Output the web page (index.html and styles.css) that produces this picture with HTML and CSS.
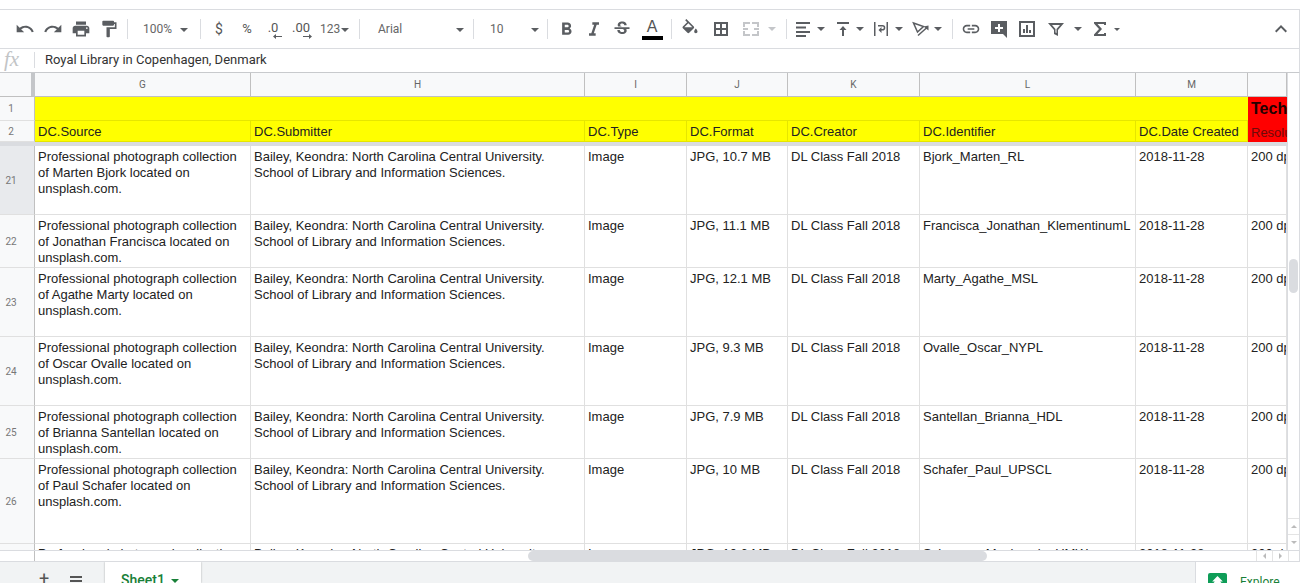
FILE: index.html
```html
<!DOCTYPE html>
<html lang="en">
<head>
    <meta charset="UTF-8">
    <meta name="viewport" content="width=device-width, initial-scale=1.0">
    <title>Sheet1</title>
    <link rel="stylesheet" href="styles.css">
</head>
<body>
    <div class="app">
        <div class="menu-strip"></div>

        <!-- toolbar -->
        <div class="toolbar">
            <button class="tool"><svg width="20" height="20" viewBox="0 0 24 24"><path d="M12.5 8c-2.65 0-5.05 1-6.9 2.6L2 7v9h9l-3.62-3.62c1.39-1.16 3.16-1.88 5.12-1.88 3.54 0 6.55 2.31 7.6 5.5l2.37-.78C21.08 11.03 17.15 8 12.5 8z"/></svg></button>
            <button class="tool"><svg width="20" height="20" viewBox="0 0 24 24"><path d="M18.4 10.6C16.55 9 14.15 8 11.5 8c-4.65 0-8.58 3.03-9.96 7.22L3.9 16c1.05-3.19 4.05-5.5 7.6-5.5 1.95 0 3.73.72 5.12 1.88L13 16h9V7l-3.6 3.6z"/></svg></button>
            <button class="tool"><svg width="20" height="20" viewBox="0 0 24 24"><path d="M19 8H5c-1.66 0-3 1.34-3 3v6h4v4h12v-4h4v-6c0-1.66-1.34-3-3-3zm-3 11H8v-5h8v5zm3-7c-.55 0-1-.45-1-1s.45-1 1-1 1 .45 1 1-.45 1-1 1zm-1-9H6v4h12V3z"/></svg></button>
            <button class="tool"><svg width="20" height="20" viewBox="0 0 24 24"><path d="M18 4V3c0-.55-.45-1-1-1H5c-.55 0-1 .45-1 1v4c0 .55.45 1 1 1h12c.55 0 1-.45 1-1V6h1v4H9v11c0 .55.45 1 1 1h2c.55 0 1-.45 1-1v-9h8V4h-3z"/></svg></button>
            <span class="sep"></span>
            <div class="drop drop-zoom"><span>100%</span><i class="arrow"></i></div>
            <span class="sep"></span>
            <button class="tool txt">$</button>
            <button class="tool txt small">%</button>
            <button class="tool dec dec-one"><span>.0</span><svg class="dec-arrow" width="9" height="5" viewBox="0 0 9 5"><path d="M3 0v2h6v1H3v2L0 2.500z"/></svg></button>
            <button class="tool dec dec-two"><span>.00</span><svg class="dec-arrow" width="9" height="5" viewBox="0 0 9 5"><path d="M6 0v2H0v1h6v2l3-2.500z"/></svg></button>
            <div class="drop drop-num"><span>123</span><i class="arrow"></i></div>
            <span class="sep sep-num"></span>
            <div class="drop drop-font"><span>Arial</span><i class="arrow"></i></div>
            <span class="sep"></span>
            <div class="drop drop-size"><span>10</span><i class="arrow"></i></div>
            <span class="sep"></span>
            <button class="tool"><svg width="21" height="21" viewBox="0 0 24 24"><path d="M15.600 10.790c.97-.67 1.650-1.770 1.650-2.790 0-2.260-1.750-4-4-4H7v14h7.040c2.090 0 3.710-1.700 3.710-3.790 0-1.520-.86-2.820-2.150-3.420zM10 6.500h3c.83 0 1.500.67 1.500 1.500s-.67 1.500-1.500 1.500h-3v-3zm3.500 9H10v-3h3.500c.83 0 1.500.67 1.500 1.500s-.67 1.500-1.500 1.500z"/></svg></button>
            <button class="tool"><svg width="20" height="20" viewBox="0 0 24 24"><path d="M10 4v3h2.210l-3.420 10H6v3h8v-3h-2.210l3.420-10H18V4z"/></svg></button>
            <button class="tool"><svg width="20" height="20" viewBox="0 0 24 24"><path d="M7.240 8.750c-.26-.48-.39-1.030-.39-1.670 0-.61.13-1.160.4-1.670.26-.5.63-.93 1.110-1.290.48-.35 1.050-.63 1.700-.83.66-.19 1.390-.29 2.180-.29.81 0 1.540.11 2.210.34.66.22 1.230.54 1.690.94.47.4.83.88 1.080 1.430s.38 1.150.38 1.810h-3.010c0-.31-.05-.59-.15-.85-.09-.27-.24-.49-.44-.68-.2-.19-.45-.33-.75-.44-.3-.1-.66-.16-1.060-.16-.39 0-.74.04-1.030.13s-.53.21-.72.36c-.19.16-.34.34-.44.55-.1.21-.15.43-.15.66 0 .48.25.88.74 1.210.38.25.77.48 1.410.7H7.390c-.05-.08-.11-.17-.15-.25zM21 12v-2H3v2h9.620c.18.07.4.14.55.2.37.17.66.34.87.51s.35.36.43.57c.07.2.11.43.11.69 0 .23-.05.45-.14.66-.09.2-.23.38-.42.53-.19.15-.42.26-.71.35-.29.08-.63.13-1.010.13-.43 0-.83-.04-1.180-.13s-.66-.23-.91-.42c-.25-.19-.45-.44-.59-.75s-.25-.76-.25-1.210H6.400c0 .55.08 1.130.24 1.580s.37.85.65 1.210c.28.35.6.66.98.92.37.26.78.48 1.220.65.44.17.9.3 1.380.39.48.08.96.13 1.440.13.8 0 1.530-.09 2.180-.28s1.210-.45 1.670-.79c.46-.34.82-.77 1.070-1.270s.38-1.070.38-1.710c0-.6-.1-1.140-.31-1.610-.05-.11-.11-.23-.17-.33H21z"/></svg></button>
            <button class="tool color-a"><span>A</span><i class="color-bar"></i></button>
            <span class="sep sep-color"></span>
            <button class="tool"><svg width="20" height="20" viewBox="0 0 24 24"><path d="M16.560 8.940L7.620 0 6.210 1.410l2.380 2.380-5.150 5.150c-.59.59-.59 1.540 0 2.120l5.500 5.500c.29.29.68.44 1.060.44s.77-.15 1.060-.44l5.500-5.500c.59-.58.59-1.530 0-2.120zM5.210 10L10 5.210 14.790 10H5.210zM19 11.500s-2 2.170-2 3.500c0 1.100.9 2 2 2s2-.9 2-2c0-1.330-2-3.500-2-3.500z"/></svg></button>
            <button class="tool m3"><svg width="18" height="18" viewBox="0 0 18 18"><path d="M2 2h14v14H2zm2 2v4h4V4zm6 0v4h4V4zM4 10v4h4v-4zm6 0v4h4v-4z" fill-rule="evenodd"/></svg></button>
            <button class="tool tool-merge m2"><svg width="18" height="18" viewBox="0 0 18 18"><path d="M1 2h7v2H3v3H1zM10 2h7v5h-2V4h-5zM1 11h2v3h5v2H1zM15 11h2v5h-7v-2h5zM1 8h5v2H1zM12 8h5v2h-5z"/></svg></button>
            <i class="arrow faded m3"></i>
            <span class="sep sep-merge"></span>
            <button class="tool tool-tight"><svg width="18" height="18" viewBox="0 0 18 18"><path d="M2 2h14v2H2zM2 6.500h10v2H2zM2 11h14v2H2zM2 15h10v2H2z"/></svg></button>
            <i class="arrow m3"></i>
            <button class="tool tool-tight m7"><svg width="18" height="18" viewBox="0 0 18 18"><path d="M3 2h12v2H3zM9 6l3.500 4H10v6H8v-6H5.500z"/></svg></button>
            <i class="arrow m2"></i>
            <button class="tool tool-tight m6"><svg width="18" height="18" viewBox="0 0 18 18"><path d="M2 2h1.500v14H2zM14.500 2H16v14h-1.500zM6 5h4.500a2.800 2.800 0 0 1 0 5.600H9.500V13L6.500 10l3-3v2.100h1a1.300 1.300 0 0 0 0-2.600H6z"/></svg></button>
            <i class="arrow m3"></i>
            <button class="tool tool-tight m7"><svg width="18" height="18" viewBox="0 0 18 18"><path d="M1.500 3 L11.500 6.500 L5.500 12z" fill="none" stroke="#5a5d61" stroke-width="1.500"/><path d="M6 15.500 L15 7.500" fill="none" stroke="#5a5d61" stroke-width="1.500"/><path d="M11.500 6.500l5-1v5z"/></svg></button>
            <i class="arrow m2"></i>
            <span class="sep sep-rot"></span>
            <button class="tool"><svg width="20" height="20" viewBox="0 0 24 24"><path d="M3.900 12c0-1.710 1.390-3.100 3.100-3.100h4V7H7c-2.760 0-5 2.240-5 5s2.240 5 5 5h4v-1.900H7c-1.710 0-3.100-1.390-3.100-3.100zM8 13h8v-2H8v2zm9-6h-4v1.900h4c1.710 0 3.100 1.390 3.100 3.100s-1.390 3.100-3.100 3.100h-4V17h4c2.760 0 5-2.240 5-5s-2.240-5-5-5z"/></svg></button>
            <button class="tool"><svg width="18" height="18" viewBox="0 0 18 18"><path d="M1 1h16v17l-4-4H1zM8 4v3H5v2h3v3h2V9h3V7h-3V4z" fill-rule="evenodd"/></svg></button>
            <button class="tool"><svg width="18" height="18" viewBox="0 0 18 18"><path d="M1 1h16v16H1zM3 3v12h12V3zM5 9h2v4H5zM8 5h2v8H8zM11 10h2v3h-2z" fill-rule="evenodd"/></svg></button>
            <button class="tool m1"><svg width="18" height="18" viewBox="0 0 18 18"><path d="M1 3h16l-6 7v6l-4-2v-4zM5 5l3.500 4v3.500l1 .5V9l3.500-4z" fill-rule="evenodd"/></svg></button>
            <i class="arrow m4"></i>
            <button class="tool m4"><svg width="18" height="18" viewBox="0 0 18 18"><path d="M3 2h12v3h-2V4H6.500l4.500 5-4.500 5H13v-1h2v3H3v-1.500L8 9 3 3.500z"/></svg></button>
            <i class="arrow arrow-small"></i>
            <button class="tool tool-caret"><svg width="18" height="18" viewBox="0 0 18 18"><path d="M9 5l6 6-1.400 1.400L9 7.800 4.400 12.400 3 11z"/></svg></button>
        </div>

        <!-- formula bar -->
        <div class="formula-bar">
            <span class="fx">fx</span>
            <span class="fx-sep"></span>
            <span class="formula-text">Royal Library in Copenhagen, Denmark</span>
        </div>

        <!-- sheet -->
        <div class="sheet">
            <div class="row col-heads">
                <div class="corner"></div>
                <div class="head">G</div><div class="head">H</div><div class="head">I</div><div class="head">J</div><div class="head">K</div><div class="head">L</div><div class="head">M</div><div class="head"></div>
            </div>
            <div class="row row-title">
                <div class="gutter">1</div>
                <div class="yellow-span"></div>
                <div class="cell red title">Technical</div>
            </div>
            <div class="row row-names">
                <div class="gutter">2</div>
                <div class="cell yellow">DC.Source</div>
                <div class="cell yellow">DC.Submitter</div>
                <div class="cell yellow">DC.Type</div>
                <div class="cell yellow">DC.Format</div>
                <div class="cell yellow">DC.Creator</div>
                <div class="cell yellow">DC.Identifier</div>
                <div class="cell yellow">DC.Date Created</div>
                <div class="cell red res">Resolution</div>
            </div>
            <div class="freeze"></div>

            <div class="row h69">
                <div class="gutter current">21</div>
                <div class="cell">Professional photograph collection of Marten Bjork located on unsplash.com.</div>
                <div class="cell">Bailey, Keondra: North Carolina Central University. School of Library and Information Sciences.</div>
                <div class="cell">Image</div>
                <div class="cell">JPG, 10.7 MB</div>
                <div class="cell">DL Class Fall 2018</div>
                <div class="cell">Bjork_Marten_RL</div>
                <div class="cell">2018-11-28</div>
                <div class="cell nowrap">200 dpi</div>
            </div>
            <div class="row h53">
                <div class="gutter">22</div>
                <div class="cell">Professional photograph collection of Jonathan Francisca located on unsplash.com.</div>
                <div class="cell">Bailey, Keondra: North Carolina Central University. School of Library and Information Sciences.</div>
                <div class="cell">Image</div>
                <div class="cell">JPG, 11.1 MB</div>
                <div class="cell">DL Class Fall 2018</div>
                <div class="cell nowrap">Francisca_Jonathan_KlementinumL</div>
                <div class="cell">2018-11-28</div>
                <div class="cell nowrap">200 dpi</div>
            </div>
            <div class="row h69">
                <div class="gutter">23</div>
                <div class="cell">Professional photograph collection of Agathe Marty located on unsplash.com.</div>
                <div class="cell">Bailey, Keondra: North Carolina Central University. School of Library and Information Sciences.</div>
                <div class="cell">Image</div>
                <div class="cell">JPG, 12.1 MB</div>
                <div class="cell">DL Class Fall 2018</div>
                <div class="cell">Marty_Agathe_MSL</div>
                <div class="cell">2018-11-28</div>
                <div class="cell nowrap">200 dpi</div>
            </div>
            <div class="row h69">
                <div class="gutter">24</div>
                <div class="cell">Professional photograph collection of Oscar Ovalle located on unsplash.com.</div>
                <div class="cell">Bailey, Keondra: North Carolina Central University. School of Library and Information Sciences.</div>
                <div class="cell">Image</div>
                <div class="cell">JPG, 9.3 MB</div>
                <div class="cell">DL Class Fall 2018</div>
                <div class="cell">Ovalle_Oscar_NYPL</div>
                <div class="cell">2018-11-28</div>
                <div class="cell nowrap">200 dpi</div>
            </div>
            <div class="row h53">
                <div class="gutter">25</div>
                <div class="cell">Professional photograph collection of Brianna Santellan located on unsplash.com.</div>
                <div class="cell">Bailey, Keondra: North Carolina Central University. School of Library and Information Sciences.</div>
                <div class="cell">Image</div>
                <div class="cell">JPG, 7.9 MB</div>
                <div class="cell">DL Class Fall 2018</div>
                <div class="cell">Santellan_Brianna_HDL</div>
                <div class="cell">2018-11-28</div>
                <div class="cell nowrap">200 dpi</div>
            </div>
            <div class="row h85">
                <div class="gutter">26</div>
                <div class="cell">Professional photograph collection of Paul Schafer located on unsplash.com.</div>
                <div class="cell">Bailey, Keondra: North Carolina Central University. School of Library and Information Sciences.</div>
                <div class="cell">Image</div>
                <div class="cell">JPG, 10 MB</div>
                <div class="cell">DL Class Fall 2018</div>
                <div class="cell">Schafer_Paul_UPSCL</div>
                <div class="cell">2018-11-28</div>
                <div class="cell nowrap">200 dpi</div>
            </div>
            <div class="row h69 row-cut">
                <div class="gutter">27</div>
                <div class="cell">Professional photograph collection of Mackenzie Schramm located on unsplash.com.</div>
                <div class="cell">Bailey, Keondra: North Carolina Central University. School of Library and Information Sciences.</div>
                <div class="cell">Image</div>
                <div class="cell">JPG, 10.6 MB</div>
                <div class="cell">DL Class Fall 2018</div>
                <div class="cell">Schramm_Mackenzie_UMW</div>
                <div class="cell">2018-11-28</div>
                <div class="cell nowrap">200 dpi</div>
            </div>

            <!-- scrollbars lie over the grid -->
            <div class="vscroll">
                <div class="vthumb"></div>
                <div class="vbtn"><i class="tri up"></i></div>
                <div class="vbtn"><i class="tri down"></i></div>
            </div>
            <div class="hscroll">
                <div class="hcorner"></div>
                <div class="hthumb"></div>
                <div class="hbtn hbtn-left"><i class="tri left"></i></div>
                <div class="hbtn hbtn-right"><i class="tri right"></i></div>
            </div>
        </div>

        <!-- sheet tabs -->
        <div class="tabs">
            <span class="tab-add">+</span>
            <span class="tab-list"><i></i><i></i><i></i></span>
            <div class="tab"><span>Sheet1</span><i class="arrow green"></i></div>
            <div class="explore">
                <span class="explore-icon"><svg width="15" height="15" viewBox="0 0 14 14"><path d="M7 1l5 5H9.500l2.500 3H2l2.500-3H2z" fill="#fff"/></svg></span>
                <span class="explore-text">Explore</span>
            </div>
        </div>
    </div>
</body>
</html>
```

FILE: styles.css
```css
* {
    box-sizing: border-box;
}
html, body {
    margin: 0;
    height: 100%;
    overflow: hidden;
}
body {
    font-family: "Liberation Sans", Arial, sans-serif;
    font-size: 13px;
    color: #222;
    background: #fff;
}
.app {
    width: 1302px;
    height: 583px;
    display: flex;
    flex-direction: column;
    overflow: hidden;
}
.menu-strip {
    height: 9px;
    flex: none;
}

/* toolbar */
.toolbar {
    height: 40px;
    flex: none;
    display: flex;
    align-items: center;
    padding-left: 11px;
    margin-right: 2px;
    border-top: 1px solid #dadce0;
    border-bottom: 1px solid #dadce0;
    border-right: 1px solid #dadce0;
    color: #444;
}
.tool {
    width: 28px;
    height: 28px;
    flex: none;
    padding: 0;
    border: 0;
    background: none;
    display: flex;
    align-items: center;
    justify-content: center;
    color: #555;
    font-family: Roboto, "Liberation Sans", sans-serif;
}
.tool svg {
    fill: #5a5d61;
}
.tool.txt {
    font-size: 14px;
    padding-bottom: 1px;
}
.tool.small {
    font-size: 13px;
}
.m1 { margin-left: 1px; }
.m2 { margin-left: 2px; }
.m3 { margin-left: 3px; }
.m4 { margin-left: 4px; }
.m6 { margin-left: 6px; }
.m7 { margin-left: 7px; }
.sep {
    width: 1px;
    height: 20px;
    flex: none;
    margin: 0 4px;
    background: #dadce0;
}
.sep-num { margin-left: 8px; }
.sep-color { margin-left: 5px; }
.sep-merge { margin: 0 5px 0 10px; }
.sep-rot { margin-left: 10px; }
.arrow {
    width: 0;
    height: 0;
    flex: none;
    border-left: 4px solid transparent;
    border-right: 4px solid transparent;
    border-top: 4px solid #5a5d61;
}
.arrow.faded {
    border-top-color: #c4c6c9;
}
.drop {
    height: 28px;
    flex: none;
    display: flex;
    align-items: center;
    justify-content: space-between;
    padding-bottom: 1px;
    font-family: Roboto, "Liberation Sans", sans-serif;
    font-size: 12px;
    color: #666;
}
.drop .arrow {
    margin-top: 2px;
}
.drop-zoom { width: 64px; padding-left: 11px; padding-right: 8px; }
.drop-num { width: 31px; margin-left: 3px; padding-right: 2px; }
.drop-font { width: 105px; padding-left: 14px; padding-right: 5px; }
.drop-size { width: 65px; padding-left: 12px; padding-right: 4px; }
.dec {
    position: relative;
    font-size: 13px;
}
.dec-one { width: 24px; }
.dec-two { width: 32px; }
.dec span {
    margin-top: -3px;
}
.dec-arrow {
    position: absolute;
    bottom: 4px;
}
.dec-one .dec-arrow { right: 3px; }
.dec-two .dec-arrow { right: 5px; }
.color-a {
    flex-direction: column;
    margin-left: 2px;
    font-family: "Liberation Sans", sans-serif;
    font-size: 16px;
    line-height: 16px;
}
.color-bar {
    width: 21px;
    height: 4px;
    margin-top: 1px;
    background: #000;
}
.tool-tight {
    width: 22px;
}
.tool-merge svg {
    fill: #c4c6c9;
}
.tool-caret {
    margin-left: auto;
    margin-right: 4px;
}
.arrow-small {
    border-left-width: 3px;
    border-right-width: 3px;
    border-top-width: 3px;
}

/* formula bar */
.formula-bar {
    height: 24px;
    flex: none;
    display: flex;
    align-items: center;
    padding-bottom: 2px;
    margin-right: 2px;
    border-bottom: 1px solid #c8cacd;
    border-right: 1px solid #dadce0;
    font-family: Roboto, "Liberation Sans", sans-serif;
    font-size: 13px;
    color: #333;
}
.fx {
    width: 34px;
    padding-left: 4px;
    font-family: "Liberation Serif", serif;
    font-style: italic;
    font-size: 21px;
    color: #c2c4c6;
}
.fx-sep {
    width: 1px;
    height: 16px;
    background: #dadce0;
}
.formula-text {
    padding-left: 10px;
}

/* grid */
.sheet {
    position: relative;
    height: 489px;
    flex: none;
    overflow: hidden;
}
.row {
    display: grid;
    grid-template-columns: 35px 216px 334px 102px 101px 132px 216px 112px 39px;
    overflow: hidden;
    width: 1287px;
}
.col-heads { height: 24px; }
.row-title {
    height: 24px;
    grid-template-columns: 35px 1213px 39px;
}
.row-names { height: 21px; }
.h53 { height: 53px; }
.h69 { height: 69px; }
.h85 { height: 85px; }
.corner {
    background: #f8f9fa;
    border-right: 4px solid #c4c6c9;
    border-bottom: 1px solid #c0c0c0;
}
.head {
    background: #f8f9fa;
    border-right: 1px solid #c0c0c0;
    border-bottom: 1px solid #c0c0c0;
    display: flex;
    align-items: center;
    justify-content: center;
    font-family: Roboto, "Liberation Sans", sans-serif;
    font-size: 10px;
    color: #666;
}
.gutter {
    background: #f8f9fa;
    border-right: 1px solid #c0c0c0;
    border-bottom: 1px solid #e0e0e0;
    display: flex;
    align-items: center;
    justify-content: center;
    padding-right: 12px;
    font-family: Roboto, "Liberation Sans", sans-serif;
    font-size: 10px;
    color: #777;
}
.gutter.current {
    background: #e8eaed;
}
.cell {
    padding: 3px 3px 2px;
    border-right: 1px solid #e0e0e0;
    border-bottom: 1px solid #e0e0e0;
    font-size: 13px;
    line-height: 16px;
    color: #222;
    overflow: hidden;
}
.row-cut .cell {
    padding-top: 2px;
}
.nowrap {
    white-space: nowrap;
}
.yellow {
    padding-bottom: 1px;
    background: #ff0;
    border-color: #e6e600;
    display: flex;
    align-items: flex-end;
}
.yellow-span {
    background: #ff0;
    border-bottom: 1px solid #e6e600;
}
.red {
    background: #f00;
    border: 0;
    white-space: nowrap;
}
.title {
    padding: 2px 3px;
    font-weight: bold;
    font-size: 16px;
    color: #200;
    display: flex;
    align-items: center;
}
.res {
    padding-bottom: 1px;
    color: #6e0a0a;
    display: flex;
    align-items: flex-end;
}
.freeze {
    height: 4px;
    width: 1287px;
    background: #dadce0;
}

/* scrollbars */
.vscroll {
    position: absolute;
    top: 0;
    left: 1287px;
    width: 13px;
    height: 477px;
    border-left: 1px solid #dadce0;
    border-right: 1px solid #dadce0;
    background: #fff;
}
.vthumb {
    position: absolute;
    top: 186px;
    left: 1px;
    width: 9px;
    height: 34px;
    border-radius: 5px;
    background: #dadce0;
}
.vbtn {
    position: absolute;
    left: 0;
    width: 11px;
    height: 16px;
    border-top: 1px solid #e4e4e4;
    display: flex;
    align-items: center;
    justify-content: center;
}
.vbtn:nth-child(2) { top: 445px; }
.vbtn:nth-child(3) { top: 461px; }
.hscroll {
    position: absolute;
    left: 0;
    top: 477px;
    width: 1300px;
    height: 12px;
    background: #fff;
    border-top: 1px solid #dadce0;
    border-bottom: 1px solid #dadce0;
    border-right: 1px solid #dadce0;
}
.hcorner {
    width: 35px;
    height: 10px;
    border-right: 1px solid #c0c0c0;
}
.hthumb {
    position: absolute;
    left: 528px;
    top: 0;
    width: 459px;
    height: 10px;
    border-radius: 5px;
    background: #dadce0;
}
.hbtn {
    position: absolute;
    top: 0;
    width: 17px;
    height: 10px;
    border-left: 1px solid #e4e4e4;
    border-right: 1px solid #e4e4e4;
    display: flex;
    align-items: center;
    justify-content: center;
}
.hbtn-left { left: 1256px; }
.hbtn-right { left: 1272px; }
.tri {
    width: 0;
    height: 0;
    border: 3px solid transparent;
}
.tri.up { border-bottom-color: #bbb; border-top-width: 0; }
.tri.down { border-top-color: #bbb; border-bottom-width: 0; }
.tri.left { border-right-color: #bbb; border-left-width: 0; }
.tri.right { border-left-color: #bbb; border-right-width: 0; }

/* tabs */
.tabs {
    height: 21px;
    flex: none;
    display: flex;
    background: #f1f3f4;
    overflow: hidden;
    margin-right: 2px;
}
.tab-add {
    width: 26px;
    margin-left: 39px;
    font-family: Roboto, sans-serif;
    font-size: 18px;
    line-height: 33px;
    color: #555;
}
.tab-list {
    width: 40px;
    padding: 14px 0 0 5px;
}
.tab-list i {
    display: block;
    width: 12px;
    height: 2px;
    margin-bottom: 2px;
    background: #555;
}
.tab {
    width: 96px;
    display: flex;
    align-items: flex-start;
    gap: 6px;
    padding: 10px 0 0 16px;
    background: #fff;
    box-shadow: 0 0 2px rgba(0, 0, 0, 0.3);
    font-family: Roboto, sans-serif;
    font-weight: 500;
    font-size: 14px;
    line-height: 17px;
    color: #188038;
}
.arrow.green {
    border-top-color: #188038;
    margin-top: 7px;
}
.explore {
    margin-left: auto;
    width: 105px;
    display: flex;
    gap: 13px;
    background: #fff;
    padding: 11px 0 0 12px;
    border-left: 1px solid #dadce0;
    font-family: Roboto, sans-serif;
    font-size: 12px;
    color: #188038;
}
.explore-text {
    padding-top: 2px;
}
.explore-icon {
    width: 19px;
    height: 19px;
    flex: none;
    padding: 2px;
    border-radius: 2px;
    background: #0f9d58;
}
```
